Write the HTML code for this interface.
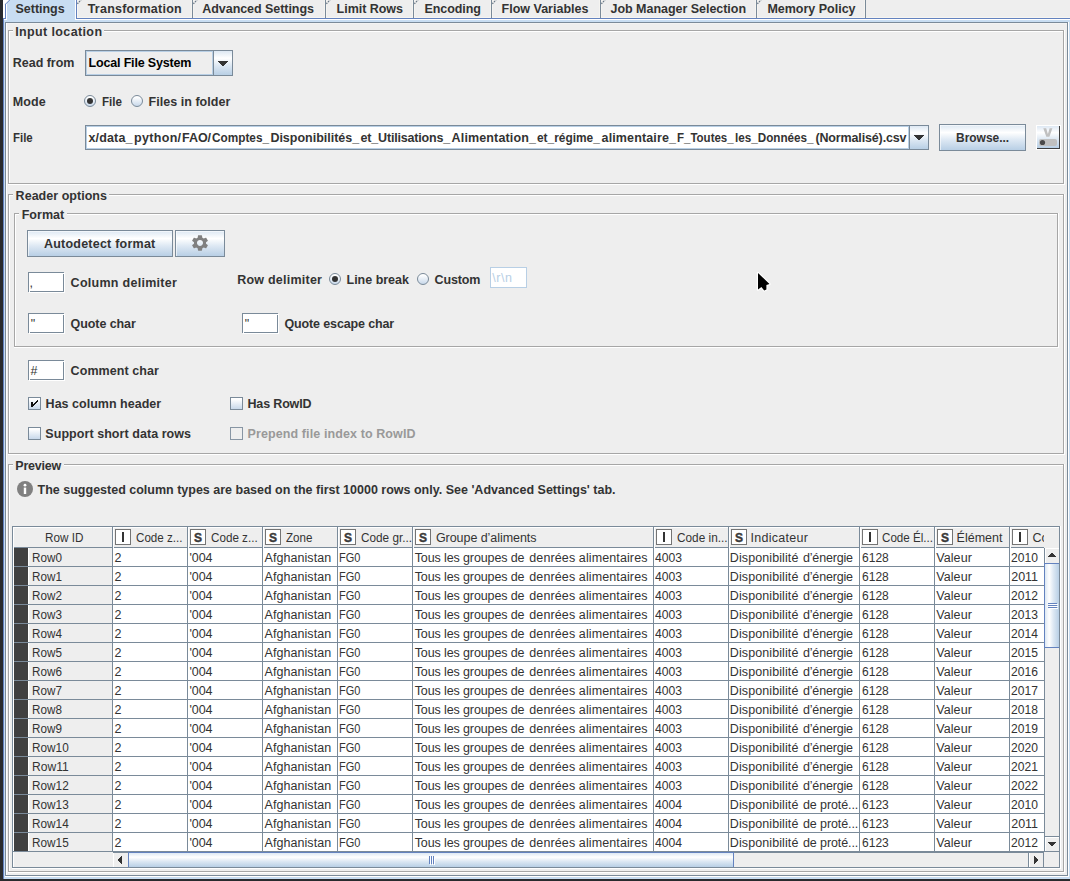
<!DOCTYPE html>
<html><head><meta charset="utf-8">
<style>
*{box-sizing:border-box;margin:0;padding:0}
html,body{width:1070px;height:881px;overflow:hidden;background:#eeeeee;font-family:"Liberation Sans",sans-serif;font-size:12.5px;color:#333333}
.t{position:absolute;white-space:pre;line-height:16px;height:16px}
</style></head><body>
<div style="position:absolute;left:3px;top:0px;width:1067px;height:18px;background:#eeeeee;"></div>
<div style="position:absolute;left:3px;top:0px;width:2px;height:18px;background:#ffffff;"></div>
<div style="position:absolute;left:4px;top:19px;width:1066px;height:3px;background:#c8ddf2;"></div>
<div style="position:absolute;left:4px;top:19px;width:1px;height:860px;background:#c8ddf2;"></div>
<div style="position:absolute;left:1069px;top:20px;width:1px;height:859px;background:#c8ddf2;"></div>
<div style="position:absolute;left:4px;top:877px;width:1066px;height:2px;background:#c8ddf2;"></div>
<div style="position:absolute;left:3px;top:18px;width:1px;height:861px;background:#6382bf;"></div>
<div style="position:absolute;left:3px;top:18px;width:1067px;height:1px;background:#6382bf;"></div>
<div style="position:absolute;left:4px;top:19px;width:1066px;height:1px;background:#ffffff;"></div>
<div style="position:absolute;left:6px;top:0px;width:70px;height:22px;background:#c8ddf2;"></div>
<div style="position:absolute;left:5px;top:0px;width:1px;height:19px;background:#6382bf;"></div>
<div style="position:absolute;left:6px;top:0px;width:1px;height:20px;background:#ffffff;"></div>
<div style="position:absolute;left:75px;top:0px;width:1px;height:20px;background:#ffffff;"></div>
<div style="position:absolute;left:77px;top:17px;width:993px;height:1px;background:#f6f5f2;"></div>
<div style="position:absolute;left:76px;top:0px;width:1px;height:19px;background:#6382bf;"></div>
<div style="position:absolute;left:77px;top:0px;width:1px;height:18px;background:#f8f7f5;"></div>
<div style="position:absolute;left:191px;top:0px;width:1px;height:18px;background:#f5f4f1;"></div>
<div style="position:absolute;left:193px;top:0px;width:1px;height:18px;background:#f5f4f1;"></div>
<div style="position:absolute;left:192px;top:0px;width:1px;height:18px;background:#7a8a99;"></div>
<div style="position:absolute;left:324px;top:0px;width:1px;height:18px;background:#f5f4f1;"></div>
<div style="position:absolute;left:326px;top:0px;width:1px;height:18px;background:#f5f4f1;"></div>
<div style="position:absolute;left:325px;top:0px;width:1px;height:18px;background:#7a8a99;"></div>
<div style="position:absolute;left:412px;top:0px;width:1px;height:18px;background:#f5f4f1;"></div>
<div style="position:absolute;left:414px;top:0px;width:1px;height:18px;background:#f5f4f1;"></div>
<div style="position:absolute;left:413px;top:0px;width:1px;height:18px;background:#7a8a99;"></div>
<div style="position:absolute;left:490px;top:0px;width:1px;height:18px;background:#f5f4f1;"></div>
<div style="position:absolute;left:492px;top:0px;width:1px;height:18px;background:#f5f4f1;"></div>
<div style="position:absolute;left:491px;top:0px;width:1px;height:18px;background:#7a8a99;"></div>
<div style="position:absolute;left:599px;top:0px;width:1px;height:18px;background:#f5f4f1;"></div>
<div style="position:absolute;left:601px;top:0px;width:1px;height:18px;background:#f5f4f1;"></div>
<div style="position:absolute;left:600px;top:0px;width:1px;height:18px;background:#7a8a99;"></div>
<div style="position:absolute;left:755px;top:0px;width:1px;height:18px;background:#f5f4f1;"></div>
<div style="position:absolute;left:757px;top:0px;width:1px;height:18px;background:#f5f4f1;"></div>
<div style="position:absolute;left:756px;top:0px;width:1px;height:18px;background:#7a8a99;"></div>
<div style="position:absolute;left:864px;top:0px;width:1px;height:18px;background:#f5f4f1;"></div>
<div style="position:absolute;left:865px;top:0px;width:1px;height:18px;background:#7a8a99;"></div>
<svg style="position:absolute;left:3px;top:0" width="8" height="5"><path d="M0 0 H6.5 L2.5 4 H0Z" fill="#fff"/><path d="M2.5 4.2 L6.7 0" stroke="#6382bf" stroke-width="1" fill="none"/></svg>
<svg style="position:absolute;left:77px;top:0" width="6" height="5"><path d="M0 0 H4 L0 4Z" fill="#f4f3f1"/><path d="M0.3 3.8 L4 0" stroke="#6c7a88" stroke-width="1.3" stroke-dasharray="1.5 0.9" fill="none"/></svg>
<svg style="position:absolute;left:193px;top:0" width="6" height="5"><path d="M0 0 H4 L0 4Z" fill="#f4f3f1"/><path d="M0.3 3.8 L4 0" stroke="#6c7a88" stroke-width="1.3" stroke-dasharray="1.5 0.9" fill="none"/></svg>
<svg style="position:absolute;left:326px;top:0" width="6" height="5"><path d="M0 0 H4 L0 4Z" fill="#f4f3f1"/><path d="M0.3 3.8 L4 0" stroke="#6c7a88" stroke-width="1.3" stroke-dasharray="1.5 0.9" fill="none"/></svg>
<svg style="position:absolute;left:414px;top:0" width="6" height="5"><path d="M0 0 H4 L0 4Z" fill="#f4f3f1"/><path d="M0.3 3.8 L4 0" stroke="#6c7a88" stroke-width="1.3" stroke-dasharray="1.5 0.9" fill="none"/></svg>
<svg style="position:absolute;left:492px;top:0" width="6" height="5"><path d="M0 0 H4 L0 4Z" fill="#f4f3f1"/><path d="M0.3 3.8 L4 0" stroke="#6c7a88" stroke-width="1.3" stroke-dasharray="1.5 0.9" fill="none"/></svg>
<svg style="position:absolute;left:601px;top:0" width="6" height="5"><path d="M0 0 H4 L0 4Z" fill="#f4f3f1"/><path d="M0.3 3.8 L4 0" stroke="#6c7a88" stroke-width="1.3" stroke-dasharray="1.5 0.9" fill="none"/></svg>
<svg style="position:absolute;left:757px;top:0" width="6" height="5"><path d="M0 0 H4 L0 4Z" fill="#f4f3f1"/><path d="M0.3 3.8 L4 0" stroke="#6c7a88" stroke-width="1.3" stroke-dasharray="1.5 0.9" fill="none"/></svg>
<div style="position:absolute;left:5px;top:22px;width:1063px;height:854px;background:#eeeeee;"></div>
<div style="position:absolute;left:5px;top:22px;width:1063px;height:1px;background:#7a8a99;"></div>
<div style="position:absolute;left:6px;top:23px;width:1061px;height:1px;background:#ffffff;"></div>
<div style="position:absolute;left:5px;top:22px;width:1px;height:854px;background:#7a8a99;"></div>
<div style="position:absolute;left:6px;top:23px;width:1px;height:852px;background:#ffffff;"></div>
<div style="position:absolute;left:5px;top:875px;width:1063px;height:1px;background:#7a8a99;"></div>
<div style="position:absolute;left:5px;top:876px;width:1064px;height:1px;background:#ffffff;"></div>
<div style="position:absolute;left:1067px;top:22px;width:1px;height:854px;background:#7a8a99;"></div>
<div style="position:absolute;left:1068px;top:22px;width:1px;height:855px;background:#ffffff;"></div>
<div style="position:absolute;left:7px;top:23px;width:1060px;height:1px;background:#f3f3f3;"></div>
<div style="position:absolute;left:0px;top:0px;width:3px;height:881px;background:#292b2e;"></div>
<div style="position:absolute;left:0px;top:879px;width:1070px;height:2px;background:#292b2e;"></div>
<div style="position:absolute;left:8px;top:30px;width:5px;height:1px;background:#a6a6a6;"></div>
<div style="position:absolute;left:104px;top:30px;width:960px;height:1px;background:#a6a6a6;"></div>
<div style="position:absolute;left:9px;top:31px;width:4px;height:1px;background:#ffffff;"></div>
<div style="position:absolute;left:104px;top:31px;width:959px;height:1px;background:#ffffff;"></div>
<div style="position:absolute;left:8px;top:30px;width:1px;height:154px;background:#a6a6a6;"></div>
<div style="position:absolute;left:9px;top:31px;width:1px;height:152px;background:#ffffff;"></div>
<div style="position:absolute;left:8px;top:183px;width:1056px;height:1px;background:#a6a6a6;"></div>
<div style="position:absolute;left:8px;top:184px;width:1057px;height:1px;background:#ffffff;"></div>
<div style="position:absolute;left:1063px;top:30px;width:1px;height:154px;background:#a6a6a6;"></div>
<div style="position:absolute;left:1064px;top:30px;width:1px;height:155px;background:#ffffff;"></div>
<div style="position:absolute;left:85px;top:50px;width:148px;height:26px;border:1px solid #7a8a99;background:#eeeeee"></div>
<div style="position:absolute;left:86px;top:51px;width:127px;height:24px;border:1px solid #b8cfe5"></div>
<div style="position:absolute;left:213px;top:50px;width:20px;height:26px;border:1px solid #7a8a99;background:linear-gradient(#dde8f3 0%,#ffffff 30%,#dde8f3 60%,#b8cfe5 100%)"></div>
<svg style="position:absolute;left:218px;top:61px" width="12" height="8" shape-rendering="crispEdges" fill="#333"><rect x="0" y="0" width="10" height="1"/><rect x="1" y="1" width="8" height="1"/><rect x="2" y="2" width="6" height="1"/><rect x="3" y="3" width="4" height="1"/><rect x="4" y="4" width="2" height="1"/></svg>
<div style="position:absolute;left:84px;top:95px;width:12px;height:12px;border-radius:50%;border:1px solid #7a8a99;background:linear-gradient(#ffffff 10%,#c8d8ea 100%)"></div>
<div style="position:absolute;left:87px;top:98px;width:6px;height:6px;border-radius:50%;background:#333"></div>
<div style="position:absolute;left:131px;top:95px;width:12px;height:12px;border-radius:50%;border:1px solid #7a8a99;background:linear-gradient(#ffffff 10%,#c8d8ea 100%)"></div>
<div style="position:absolute;left:85px;top:125px;width:844px;height:25px;border:1px solid #7a8a99;background:#ffffff"></div>
<div style="position:absolute;left:86px;top:126px;width:823px;height:23px;border:1px solid #b8cfe5"></div>
<div style="position:absolute;left:909px;top:125px;width:20px;height:25px;border:1px solid #7a8a99;background:linear-gradient(#dde8f3 0%,#ffffff 30%,#dde8f3 60%,#b8cfe5 100%)"></div>
<svg style="position:absolute;left:914px;top:135px" width="12" height="8" shape-rendering="crispEdges" fill="#333"><rect x="0" y="0" width="10" height="1"/><rect x="1" y="1" width="8" height="1"/><rect x="2" y="2" width="6" height="1"/><rect x="3" y="3" width="4" height="1"/><rect x="4" y="4" width="2" height="1"/></svg>
<div style="position:absolute;left:939px;top:124px;width:87px;height:27px;border:1px solid #7a8a99;background:linear-gradient(#dde8f3 0%,#ffffff 30%,#dde8f3 60%,#b8cfe5 100%)"></div>
<div style="position:absolute;left:940px;top:125px;width:85px;height:1px;background:rgba(255,255,255,.6);"></div>
<div style="position:absolute;left:940px;top:125px;width:1px;height:25px;background:rgba(255,255,255,.6);"></div>
<div style="position:absolute;left:1036px;top:125px;width:25px;height:25px;background:#ffffff;"></div>
<div style="position:absolute;left:1037px;top:126px;width:23px;height:23px;background:#404040;"></div>
<div style="position:absolute;left:1037px;top:126px;width:22px;height:22px;background:;background:linear-gradient(#dde8f3 0%,#ffffff 30%,#dde8f3 60%,#b8cfe5 100%)"></div>
<svg style="position:absolute;left:1037px;top:126px" width="22" height="22"><path d="M6.3 2.2 H9.2 L10.9 8 L12.6 2.2 H15.4 L12.4 10.8 H9.3 Z" fill="#c0c0c0"/><rect x="2" y="13" width="18" height="7" rx="2" fill="#c0c0c0"/><circle cx="5.5" cy="16.5" r="2.6" fill="#4a4a4a"/></svg>
<div style="position:absolute;left:8px;top:194px;width:5px;height:1px;background:#a6a6a6;"></div>
<div style="position:absolute;left:109px;top:194px;width:955px;height:1px;background:#a6a6a6;"></div>
<div style="position:absolute;left:9px;top:195px;width:4px;height:1px;background:#ffffff;"></div>
<div style="position:absolute;left:109px;top:195px;width:954px;height:1px;background:#ffffff;"></div>
<div style="position:absolute;left:8px;top:194px;width:1px;height:260px;background:#a6a6a6;"></div>
<div style="position:absolute;left:9px;top:195px;width:1px;height:258px;background:#ffffff;"></div>
<div style="position:absolute;left:8px;top:453px;width:1056px;height:1px;background:#a6a6a6;"></div>
<div style="position:absolute;left:8px;top:454px;width:1057px;height:1px;background:#ffffff;"></div>
<div style="position:absolute;left:1063px;top:194px;width:1px;height:260px;background:#a6a6a6;"></div>
<div style="position:absolute;left:1064px;top:194px;width:1px;height:261px;background:#ffffff;"></div>
<div style="position:absolute;left:14px;top:213px;width:5px;height:1px;background:#a6a6a6;"></div>
<div style="position:absolute;left:67px;top:213px;width:991px;height:1px;background:#a6a6a6;"></div>
<div style="position:absolute;left:15px;top:214px;width:4px;height:1px;background:#ffffff;"></div>
<div style="position:absolute;left:67px;top:214px;width:990px;height:1px;background:#ffffff;"></div>
<div style="position:absolute;left:14px;top:213px;width:1px;height:134px;background:#a6a6a6;"></div>
<div style="position:absolute;left:15px;top:214px;width:1px;height:132px;background:#ffffff;"></div>
<div style="position:absolute;left:14px;top:346px;width:1044px;height:1px;background:#a6a6a6;"></div>
<div style="position:absolute;left:14px;top:347px;width:1045px;height:1px;background:#ffffff;"></div>
<div style="position:absolute;left:1057px;top:213px;width:1px;height:134px;background:#a6a6a6;"></div>
<div style="position:absolute;left:1058px;top:213px;width:1px;height:135px;background:#ffffff;"></div>
<div style="position:absolute;left:27px;top:230px;width:146px;height:27px;border:1px solid #7a8a99;background:linear-gradient(#dde8f3 0%,#ffffff 30%,#dde8f3 60%,#b8cfe5 100%)"></div>
<div style="position:absolute;left:28px;top:231px;width:144px;height:1px;background:rgba(255,255,255,.6);"></div>
<div style="position:absolute;left:28px;top:231px;width:1px;height:25px;background:rgba(255,255,255,.6);"></div>
<div style="position:absolute;left:175px;top:230px;width:50px;height:27px;border:1px solid #7a8a99;background:linear-gradient(#dde8f3 0%,#ffffff 30%,#dde8f3 60%,#b8cfe5 100%)"></div>
<div style="position:absolute;left:176px;top:231px;width:48px;height:1px;background:rgba(255,255,255,.6);"></div>
<div style="position:absolute;left:176px;top:231px;width:1px;height:25px;background:rgba(255,255,255,.6);"></div>
<svg style="position:absolute;left:192px;top:235px" width="16" height="16" viewBox="2.5 2 19 20" preserveAspectRatio="none"><path fill="#808080" d="M19.14 12.94c.04-.3.06-.61.06-.94 0-.32-.02-.64-.07-.94l2.03-1.58a.49.49 0 0 0 .12-.61l-1.92-3.32a.488.488 0 0 0-.59-.22l-2.39.96c-.5-.38-1.03-.7-1.62-.94l-.36-2.54a.484.484 0 0 0-.48-.41h-3.84c-.24 0-.43.17-.47.41l-.36 2.54c-.59.24-1.13.57-1.62.94l-2.39-.96c-.22-.08-.47 0-.59.22L2.74 8.87c-.12.21-.08.47.12.61l2.03 1.58c-.05.3-.09.63-.09.94s.02.64.07.94l-2.03 1.58a.49.49 0 0 0-.12.61l1.92 3.32c.12.22.37.29.59.22l2.39-.96c.5.38 1.03.7 1.62.94l.36 2.54c.05.24.24.41.48.41h3.84c.24 0 .44-.17.47-.41l.36-2.54c.59-.24 1.13-.56 1.62-.94l2.39.96c.22.08.47 0 .59-.22l1.92-3.32c.12-.22.07-.47-.12-.61l-2.01-1.58zM12 15.6c-1.98 0-3.600-1.620-3.600-3.600s1.620-3.600 3.600-3.600 3.600 1.620 3.600 3.600-1.620 3.600-3.600 3.600z"/></svg>
<div style="position:absolute;left:29px;top:273px;width:36px;height:20px;border:1px solid #ffffff"></div>
<div style="position:absolute;left:28px;top:272px;width:36px;height:20px;border:1px solid #7a8a99;background:#ffffff"></div>
<div style="position:absolute;left:63px;top:273px;width:1px;height:1px;background:#ffffff;"></div>
<div style="position:absolute;left:29px;top:291px;width:1px;height:1px;background:#ffffff;"></div>
<div style="position:absolute;left:329px;top:273px;width:12px;height:12px;border-radius:50%;border:1px solid #7a8a99;background:linear-gradient(#ffffff 10%,#c8d8ea 100%)"></div>
<div style="position:absolute;left:332px;top:276px;width:6px;height:6px;border-radius:50%;background:#333"></div>
<div style="position:absolute;left:417px;top:273px;width:12px;height:12px;border-radius:50%;border:1px solid #7a8a99;background:linear-gradient(#ffffff 10%,#c8d8ea 100%)"></div>
<div style="position:absolute;left:490px;top:267px;width:37px;height:21px;border:1px solid #b8cfe5;background:#ffffff"></div>
<div style="position:absolute;left:29px;top:314px;width:36px;height:20px;border:1px solid #ffffff"></div>
<div style="position:absolute;left:28px;top:313px;width:36px;height:20px;border:1px solid #7a8a99;background:#ffffff"></div>
<div style="position:absolute;left:63px;top:314px;width:1px;height:1px;background:#ffffff;"></div>
<div style="position:absolute;left:29px;top:332px;width:1px;height:1px;background:#ffffff;"></div>
<div style="position:absolute;left:243px;top:314px;width:36px;height:20px;border:1px solid #ffffff"></div>
<div style="position:absolute;left:242px;top:313px;width:36px;height:20px;border:1px solid #7a8a99;background:#ffffff"></div>
<div style="position:absolute;left:277px;top:314px;width:1px;height:1px;background:#ffffff;"></div>
<div style="position:absolute;left:243px;top:332px;width:1px;height:1px;background:#ffffff;"></div>
<div style="position:absolute;left:29px;top:361px;width:36px;height:20px;border:1px solid #ffffff"></div>
<div style="position:absolute;left:28px;top:360px;width:36px;height:20px;border:1px solid #7a8a99;background:#ffffff"></div>
<div style="position:absolute;left:63px;top:361px;width:1px;height:1px;background:#ffffff;"></div>
<div style="position:absolute;left:29px;top:379px;width:1px;height:1px;background:#ffffff;"></div>
<div style="position:absolute;left:28px;top:397px;width:13px;height:13px;border:1px solid #7a8a99;background:linear-gradient(#ffffff 10%,#c8d8ea 100%)"></div>
<svg style="position:absolute;left:28px;top:397px" width="13" height="13" shape-rendering="crispEdges" fill="#111"><rect x="3" y="5" width="2" height="5"/><rect x="9" y="3" width="1" height="1"/><rect x="8" y="4" width="1" height="1"/><rect x="7" y="5" width="1" height="1"/><rect x="6" y="6" width="1" height="1"/><rect x="5" y="7" width="1" height="1"/><rect x="9" y="4" width="1" height="1"/><rect x="8" y="5" width="1" height="1"/><rect x="7" y="6" width="1" height="1"/><rect x="6" y="7" width="1" height="1"/><rect x="5" y="8" width="1" height="1"/></svg>
<div style="position:absolute;left:230px;top:397px;width:13px;height:13px;border:1px solid #7a8a99;background:linear-gradient(#ffffff 10%,#c8d8ea 100%)"></div>
<div style="position:absolute;left:28px;top:427px;width:13px;height:13px;border:1px solid #7a8a99;background:linear-gradient(#ffffff 10%,#c8d8ea 100%)"></div>
<div style="position:absolute;left:230px;top:427px;width:13px;height:13px;border:1px solid #8795a3;background:#eeeeee"></div>
<div style="position:absolute;left:8px;top:464px;width:5px;height:1px;background:#a6a6a6;"></div>
<div style="position:absolute;left:64px;top:464px;width:1000px;height:1px;background:#a6a6a6;"></div>
<div style="position:absolute;left:9px;top:465px;width:4px;height:1px;background:#ffffff;"></div>
<div style="position:absolute;left:64px;top:465px;width:999px;height:1px;background:#ffffff;"></div>
<div style="position:absolute;left:8px;top:464px;width:1px;height:408px;background:#a6a6a6;"></div>
<div style="position:absolute;left:9px;top:465px;width:1px;height:406px;background:#ffffff;"></div>
<div style="position:absolute;left:8px;top:871px;width:1056px;height:1px;background:#a6a6a6;"></div>
<div style="position:absolute;left:8px;top:872px;width:1057px;height:1px;background:#ffffff;"></div>
<div style="position:absolute;left:1063px;top:464px;width:1px;height:408px;background:#a6a6a6;"></div>
<div style="position:absolute;left:1064px;top:464px;width:1px;height:409px;background:#ffffff;"></div>
<svg style="position:absolute;left:17px;top:481px" width="16" height="16"><circle cx="8" cy="8" r="8" fill="#808080"/><rect x="6.8" y="6.6" width="2.4" height="6.4" fill="#fff"/><circle cx="8" cy="4.2" r="1.4" fill="#fff"/></svg>
<div style="position:absolute;left:12px;top:526px;width:1048px;height:342px;background:#eeeeee;"></div>
<div style="position:absolute;left:12px;top:526px;width:1048px;height:1px;background:#7a8a99;"></div>
<div style="position:absolute;left:13px;top:527px;width:1046px;height:1px;background:#ffffff;"></div>
<div style="position:absolute;left:12px;top:526px;width:1px;height:342px;background:#7a8a99;"></div>
<div style="position:absolute;left:13px;top:527px;width:1px;height:340px;background:#ffffff;"></div>
<div style="position:absolute;left:12px;top:867px;width:1048px;height:1px;background:#7a8a99;"></div>
<div style="position:absolute;left:12px;top:868px;width:1049px;height:1px;background:#ffffff;"></div>
<div style="position:absolute;left:1059px;top:526px;width:1px;height:342px;background:#7a8a99;"></div>
<div style="position:absolute;left:1060px;top:526px;width:1px;height:343px;background:#ffffff;"></div>
<div style="position:absolute;left:113px;top:548px;width:931px;height:303px;background:#ffffff;"></div>
<div style="position:absolute;left:13px;top:527px;width:1031px;height:1px;background:#ffffff;"></div>
<div style="position:absolute;left:112px;top:527px;width:1px;height:325px;background:#7a8a99;"></div>
<div style="position:absolute;left:187px;top:527px;width:1px;height:325px;background:#7a8a99;"></div>
<div style="position:absolute;left:262px;top:527px;width:1px;height:325px;background:#7a8a99;"></div>
<div style="position:absolute;left:337px;top:527px;width:1px;height:325px;background:#7a8a99;"></div>
<div style="position:absolute;left:412px;top:527px;width:1px;height:325px;background:#7a8a99;"></div>
<div style="position:absolute;left:653px;top:527px;width:1px;height:325px;background:#7a8a99;"></div>
<div style="position:absolute;left:728px;top:527px;width:1px;height:325px;background:#7a8a99;"></div>
<div style="position:absolute;left:859px;top:527px;width:1px;height:325px;background:#7a8a99;"></div>
<div style="position:absolute;left:934px;top:527px;width:1px;height:325px;background:#7a8a99;"></div>
<div style="position:absolute;left:1009px;top:527px;width:1px;height:325px;background:#7a8a99;"></div>
<div style="position:absolute;left:14px;top:547px;width:1030px;height:1px;background:#7a8a99;"></div>
<div style="position:absolute;left:113px;top:527px;width:1px;height:21px;background:#ffffff;"></div>
<div style="position:absolute;left:188px;top:527px;width:1px;height:21px;background:#ffffff;"></div>
<div style="position:absolute;left:263px;top:527px;width:1px;height:21px;background:#ffffff;"></div>
<div style="position:absolute;left:338px;top:527px;width:1px;height:21px;background:#ffffff;"></div>
<div style="position:absolute;left:413px;top:527px;width:1px;height:21px;background:#ffffff;"></div>
<div style="position:absolute;left:654px;top:527px;width:1px;height:21px;background:#ffffff;"></div>
<div style="position:absolute;left:729px;top:527px;width:1px;height:21px;background:#ffffff;"></div>
<div style="position:absolute;left:860px;top:527px;width:1px;height:21px;background:#ffffff;"></div>
<div style="position:absolute;left:935px;top:527px;width:1px;height:21px;background:#ffffff;"></div>
<div style="position:absolute;left:1010px;top:527px;width:1px;height:21px;background:#ffffff;"></div>
<div style="position:absolute;left:14px;top:566px;width:1030px;height:1px;background:#7a8a99;"></div>
<div style="position:absolute;left:14px;top:585px;width:1030px;height:1px;background:#7a8a99;"></div>
<div style="position:absolute;left:14px;top:604px;width:1030px;height:1px;background:#7a8a99;"></div>
<div style="position:absolute;left:14px;top:623px;width:1030px;height:1px;background:#7a8a99;"></div>
<div style="position:absolute;left:14px;top:642px;width:1030px;height:1px;background:#7a8a99;"></div>
<div style="position:absolute;left:14px;top:661px;width:1030px;height:1px;background:#7a8a99;"></div>
<div style="position:absolute;left:14px;top:680px;width:1030px;height:1px;background:#7a8a99;"></div>
<div style="position:absolute;left:14px;top:699px;width:1030px;height:1px;background:#7a8a99;"></div>
<div style="position:absolute;left:14px;top:718px;width:1030px;height:1px;background:#7a8a99;"></div>
<div style="position:absolute;left:14px;top:737px;width:1030px;height:1px;background:#7a8a99;"></div>
<div style="position:absolute;left:14px;top:756px;width:1030px;height:1px;background:#7a8a99;"></div>
<div style="position:absolute;left:14px;top:775px;width:1030px;height:1px;background:#7a8a99;"></div>
<div style="position:absolute;left:14px;top:794px;width:1030px;height:1px;background:#7a8a99;"></div>
<div style="position:absolute;left:14px;top:813px;width:1030px;height:1px;background:#7a8a99;"></div>
<div style="position:absolute;left:14px;top:832px;width:1030px;height:1px;background:#7a8a99;"></div>
<div style="position:absolute;left:14px;top:851px;width:1030px;height:1px;background:#7a8a99;"></div>
<div style="position:absolute;left:13px;top:851px;width:1031px;height:1px;background:#7a8a99;"></div>
<div style="position:absolute;left:14px;top:548px;width:14px;height:18px;background:#404040;"></div>
<div style="position:absolute;left:28px;top:548px;width:1px;height:18px;background:#ffffff;"></div>
<div style="position:absolute;left:14px;top:567px;width:14px;height:18px;background:#404040;"></div>
<div style="position:absolute;left:28px;top:567px;width:1px;height:18px;background:#ffffff;"></div>
<div style="position:absolute;left:14px;top:586px;width:14px;height:18px;background:#404040;"></div>
<div style="position:absolute;left:28px;top:586px;width:1px;height:18px;background:#ffffff;"></div>
<div style="position:absolute;left:14px;top:605px;width:14px;height:18px;background:#404040;"></div>
<div style="position:absolute;left:28px;top:605px;width:1px;height:18px;background:#ffffff;"></div>
<div style="position:absolute;left:14px;top:624px;width:14px;height:18px;background:#404040;"></div>
<div style="position:absolute;left:28px;top:624px;width:1px;height:18px;background:#ffffff;"></div>
<div style="position:absolute;left:14px;top:643px;width:14px;height:18px;background:#404040;"></div>
<div style="position:absolute;left:28px;top:643px;width:1px;height:18px;background:#ffffff;"></div>
<div style="position:absolute;left:14px;top:662px;width:14px;height:18px;background:#404040;"></div>
<div style="position:absolute;left:28px;top:662px;width:1px;height:18px;background:#ffffff;"></div>
<div style="position:absolute;left:14px;top:681px;width:14px;height:18px;background:#404040;"></div>
<div style="position:absolute;left:28px;top:681px;width:1px;height:18px;background:#ffffff;"></div>
<div style="position:absolute;left:14px;top:700px;width:14px;height:18px;background:#404040;"></div>
<div style="position:absolute;left:28px;top:700px;width:1px;height:18px;background:#ffffff;"></div>
<div style="position:absolute;left:14px;top:719px;width:14px;height:18px;background:#404040;"></div>
<div style="position:absolute;left:28px;top:719px;width:1px;height:18px;background:#ffffff;"></div>
<div style="position:absolute;left:14px;top:738px;width:14px;height:18px;background:#404040;"></div>
<div style="position:absolute;left:28px;top:738px;width:1px;height:18px;background:#ffffff;"></div>
<div style="position:absolute;left:14px;top:757px;width:14px;height:18px;background:#404040;"></div>
<div style="position:absolute;left:28px;top:757px;width:1px;height:18px;background:#ffffff;"></div>
<div style="position:absolute;left:14px;top:776px;width:14px;height:18px;background:#404040;"></div>
<div style="position:absolute;left:28px;top:776px;width:1px;height:18px;background:#ffffff;"></div>
<div style="position:absolute;left:14px;top:795px;width:14px;height:18px;background:#404040;"></div>
<div style="position:absolute;left:28px;top:795px;width:1px;height:18px;background:#ffffff;"></div>
<div style="position:absolute;left:14px;top:814px;width:14px;height:18px;background:#404040;"></div>
<div style="position:absolute;left:28px;top:814px;width:1px;height:18px;background:#ffffff;"></div>
<div style="position:absolute;left:14px;top:833px;width:14px;height:18px;background:#404040;"></div>
<div style="position:absolute;left:28px;top:833px;width:1px;height:18px;background:#ffffff;"></div>
<div style="position:absolute;left:115px;top:529px;width:16px;height:16px;border:1px solid #747474;background:#fff"></div>
<div style="position:absolute;left:122px;top:532px;width:2px;height:10px;background:#333;"></div>
<div style="position:absolute;left:190px;top:529px;width:16px;height:16px;border:1px solid #747474;background:#fff"></div>
<svg style="position:absolute;left:190px;top:529px" width="16" height="16"><text x="8.1" y="12.75" text-anchor="middle" font-family="Liberation Sans" font-weight="bold" font-size="13.4" fill="#3a3a3a" stroke="#3a3a3a" stroke-width="0.45" textLength="8" lengthAdjust="spacingAndGlyphs">S</text></svg>
<div style="position:absolute;left:265px;top:529px;width:16px;height:16px;border:1px solid #747474;background:#fff"></div>
<svg style="position:absolute;left:265px;top:529px" width="16" height="16"><text x="8.1" y="12.75" text-anchor="middle" font-family="Liberation Sans" font-weight="bold" font-size="13.4" fill="#3a3a3a" stroke="#3a3a3a" stroke-width="0.45" textLength="8" lengthAdjust="spacingAndGlyphs">S</text></svg>
<div style="position:absolute;left:340px;top:529px;width:16px;height:16px;border:1px solid #747474;background:#fff"></div>
<svg style="position:absolute;left:340px;top:529px" width="16" height="16"><text x="8.1" y="12.75" text-anchor="middle" font-family="Liberation Sans" font-weight="bold" font-size="13.4" fill="#3a3a3a" stroke="#3a3a3a" stroke-width="0.45" textLength="8" lengthAdjust="spacingAndGlyphs">S</text></svg>
<div style="position:absolute;left:415px;top:529px;width:16px;height:16px;border:1px solid #747474;background:#fff"></div>
<svg style="position:absolute;left:415px;top:529px" width="16" height="16"><text x="8.1" y="12.75" text-anchor="middle" font-family="Liberation Sans" font-weight="bold" font-size="13.4" fill="#3a3a3a" stroke="#3a3a3a" stroke-width="0.45" textLength="8" lengthAdjust="spacingAndGlyphs">S</text></svg>
<div style="position:absolute;left:656px;top:529px;width:16px;height:16px;border:1px solid #747474;background:#fff"></div>
<div style="position:absolute;left:663px;top:532px;width:2px;height:10px;background:#333;"></div>
<div style="position:absolute;left:731px;top:529px;width:16px;height:16px;border:1px solid #747474;background:#fff"></div>
<svg style="position:absolute;left:731px;top:529px" width="16" height="16"><text x="8.1" y="12.75" text-anchor="middle" font-family="Liberation Sans" font-weight="bold" font-size="13.4" fill="#3a3a3a" stroke="#3a3a3a" stroke-width="0.45" textLength="8" lengthAdjust="spacingAndGlyphs">S</text></svg>
<div style="position:absolute;left:862px;top:529px;width:16px;height:16px;border:1px solid #747474;background:#fff"></div>
<div style="position:absolute;left:869px;top:532px;width:2px;height:10px;background:#333;"></div>
<div style="position:absolute;left:937px;top:529px;width:16px;height:16px;border:1px solid #747474;background:#fff"></div>
<svg style="position:absolute;left:937px;top:529px" width="16" height="16"><text x="8.1" y="12.75" text-anchor="middle" font-family="Liberation Sans" font-weight="bold" font-size="13.4" fill="#3a3a3a" stroke="#3a3a3a" stroke-width="0.45" textLength="8" lengthAdjust="spacingAndGlyphs">S</text></svg>
<div style="position:absolute;left:1012px;top:529px;width:16px;height:16px;border:1px solid #747474;background:#fff"></div>
<div style="position:absolute;left:1019px;top:532px;width:2px;height:10px;background:#333;"></div>
<div style="position:absolute;left:1044px;top:548px;width:15px;height:304px;background:#eeeeee;"></div>
<div style="position:absolute;left:1044px;top:548px;width:1px;height:304px;background:#7a8a99;"></div>
<div style="position:absolute;left:1045px;top:548px;width:14px;height:1px;background:#ffffff;"></div>
<svg style="position:absolute;left:1048px;top:553px" width="8" height="4" shape-rendering="crispEdges" fill="#333"><rect x="3" y="0" width="2" height="1"/><rect x="2" y="1" width="4" height="1"/><rect x="1" y="2" width="6" height="1"/><rect x="0" y="3" width="8" height="1"/></svg>
<div style="position:absolute;left:1044px;top:563px;width:15px;height:85px;border:1px solid #6382bf;border-right:none;background:linear-gradient(90deg,#dde8f3 0%,#ffffff 30%,#dde8f3 60%,#b8cfe5 100%)"></div>
<div style="position:absolute;left:1048px;top:603px;width:9px;height:1px;background:#6382bf;"></div>
<div style="position:absolute;left:1049px;top:604px;width:9px;height:1px;background:#ffffff;"></div>
<div style="position:absolute;left:1048px;top:605px;width:9px;height:1px;background:#6382bf;"></div>
<div style="position:absolute;left:1049px;top:606px;width:9px;height:1px;background:#ffffff;"></div>
<div style="position:absolute;left:1048px;top:607px;width:9px;height:1px;background:#6382bf;"></div>
<div style="position:absolute;left:1049px;top:608px;width:9px;height:1px;background:#ffffff;"></div>
<div style="position:absolute;left:1045px;top:836px;width:14px;height:1px;background:#7a8a99;"></div>
<div style="position:absolute;left:1045px;top:837px;width:14px;height:1px;background:#ffffff;"></div>
<div style="position:absolute;left:1045px;top:837px;width:1px;height:14px;background:#ffffff;"></div>
<div style="position:absolute;left:1045px;top:549px;width:1px;height:14px;background:#ffffff;"></div>
<svg style="position:absolute;left:1048px;top:842px" width="8" height="4" shape-rendering="crispEdges" fill="#333"><rect x="0" y="0" width="8" height="1"/><rect x="1" y="1" width="6" height="1"/><rect x="2" y="2" width="4" height="1"/><rect x="3" y="3" width="2" height="1"/></svg>
<div style="position:absolute;left:1044px;top:851px;width:15px;height:1px;background:#7a8a99;"></div>
<div style="position:absolute;left:113px;top:852px;width:931px;height:1px;background:#7a8a99;"></div>
<div style="position:absolute;left:113px;top:853px;width:1px;height:14px;background:#ffffff;"></div>
<svg style="position:absolute;left:118px;top:856px" width="4" height="8" shape-rendering="crispEdges" fill="#333"><rect x="3" y="0" width="1" height="8"/><rect x="2" y="1" width="1" height="6"/><rect x="1" y="2" width="1" height="4"/><rect x="0" y="3" width="1" height="2"/></svg>
<div style="position:absolute;left:128px;top:852px;width:606px;height:15px;border:1px solid #6382bf;border-bottom:none;background:linear-gradient(#dde8f3 0%,#ffffff 30%,#dde8f3 60%,#b8cfe5 100%)"></div>
<div style="position:absolute;left:429px;top:856px;width:1px;height:8px;background:#6382bf;"></div>
<div style="position:absolute;left:430px;top:857px;width:1px;height:8px;background:#ffffff;"></div>
<div style="position:absolute;left:431px;top:856px;width:1px;height:8px;background:#6382bf;"></div>
<div style="position:absolute;left:432px;top:857px;width:1px;height:8px;background:#ffffff;"></div>
<div style="position:absolute;left:433px;top:856px;width:1px;height:8px;background:#6382bf;"></div>
<div style="position:absolute;left:434px;top:857px;width:1px;height:8px;background:#ffffff;"></div>
<div style="position:absolute;left:1028px;top:853px;width:1px;height:14px;background:#7a8a99;"></div>
<div style="position:absolute;left:1029px;top:853px;width:1px;height:14px;background:#ffffff;"></div>
<svg style="position:absolute;left:1034px;top:856px" width="4" height="8" shape-rendering="crispEdges" fill="#333"><rect x="0" y="0" width="1" height="8"/><rect x="1" y="1" width="1" height="6"/><rect x="2" y="2" width="1" height="4"/><rect x="3" y="3" width="1" height="2"/></svg>
<div style="position:absolute;left:1043px;top:852px;width:1px;height:15px;background:#7a8a99;"></div>
<svg style="position:absolute;left:750px;top:266px" width="30" height="32"><path d="M8 7 L19.5 18 L16.4 18.9 L16.4 23.4 L14.2 24.4 L11.4 21 L8 23.6 Z" fill="#000" stroke="#fff" stroke-width="2.4" stroke-linejoin="round" paint-order="stroke"/></svg>
<div class="t" style="left:15.50px;top:1px;letter-spacing:-0.023px;color:#333333;font-size:12.5px;font-weight:bold;">Settings</div>
<div class="t" style="left:87.70px;top:1px;letter-spacing:0.227px;color:#333333;font-size:12.5px;font-weight:bold;">Transformation</div>
<div class="t" style="left:202.30px;top:1px;letter-spacing:-0.055px;color:#333333;font-size:12.5px;font-weight:bold;">Advanced Settings</div>
<div class="t" style="left:336.60px;top:1px;letter-spacing:-0.035px;color:#333333;font-size:12.5px;font-weight:bold;">Limit Rows</div>
<div class="t" style="left:424.60px;top:1px;letter-spacing:-0.101px;color:#333333;font-size:12.5px;font-weight:bold;">Encoding</div>
<div class="t" style="left:501.50px;top:1px;letter-spacing:0.009px;color:#333333;font-size:12.5px;font-weight:bold;">Flow Variables</div>
<div class="t" style="left:610.50px;top:1px;letter-spacing:-0.030px;color:#333333;font-size:12.5px;font-weight:bold;">Job Manager Selection</div>
<div class="t" style="left:767.40px;top:1px;letter-spacing:-0.006px;color:#333333;font-size:12.5px;font-weight:bold;">Memory Policy</div>
<div class="t" style="left:15.20px;top:24px;letter-spacing:0.377px;color:#333333;font-size:12.5px;font-weight:bold;">Input location</div>
<div class="t" style="left:12.80px;top:55px;letter-spacing:-0.025px;color:#333333;font-size:12.5px;font-weight:bold;">Read from</div>
<div class="t" style="left:88.60px;top:55px;letter-spacing:-0.180px;color:#000000;font-size:12.5px;font-weight:bold;">Local File System</div>
<div class="t" style="left:12.80px;top:94px;letter-spacing:0.105px;color:#333333;font-size:12.5px;font-weight:bold;">Mode</div>
<div class="t" style="left:102.00px;top:94px;transform:scaleX(0.9267);transform-origin:0 0;color:#333333;font-size:12.5px;font-weight:bold;">File</div>
<div class="t" style="left:148.60px;top:94px;letter-spacing:0.029px;color:#333333;font-size:12.5px;font-weight:bold;">Files in folder</div>
<div class="t" style="left:12.80px;top:130px;transform:scaleX(0.9128);transform-origin:0 0;color:#333333;font-size:12.5px;font-weight:bold;">File</div>
<div class="t" style="left:88.40px;top:130px;letter-spacing:0.179px;color:#333333;font-size:12.5px;font-weight:bold;">x/data_</div>
<div class="t" style="left:134.00px;top:130px;letter-spacing:0.324px;color:#333333;font-size:12.5px;font-weight:bold;">python/</div>
<div class="t" style="left:182.00px;top:130px;letter-spacing:-0.032px;color:#333333;font-size:12.5px;font-weight:bold;">FAO/</div>
<div class="t" style="left:212.00px;top:130px;transform:scaleX(0.9434);transform-origin:0 0;color:#333333;font-size:12.5px;font-weight:bold;">Comptes_</div>
<div class="t" style="left:270.40px;top:130px;letter-spacing:-0.011px;color:#333333;font-size:12.5px;font-weight:bold;">Disponibilités_</div>
<div class="t" style="left:360.60px;top:130px;letter-spacing:-0.189px;color:#333333;font-size:12.5px;font-weight:bold;">et_Utilisations_</div>
<div class="t" style="left:451.60px;top:130px;letter-spacing:0.142px;color:#333333;font-size:12.5px;font-weight:bold;">Alimentation_</div>
<div class="t" style="left:537.40px;top:130px;transform:scaleX(0.9514);transform-origin:0 0;color:#333333;font-size:12.5px;font-weight:bold;">et_régime_</div>
<div class="t" style="left:601.60px;top:130px;letter-spacing:0.127px;color:#333333;font-size:12.5px;font-weight:bold;">alimentaire_</div>
<div class="t" style="left:677.40px;top:130px;transform:scaleX(0.9196);transform-origin:0 0;color:#333333;font-size:12.5px;font-weight:bold;">F_Toutes_</div>
<div class="t" style="left:735.40px;top:130px;transform:scaleX(0.9352);transform-origin:0 0;color:#333333;font-size:12.5px;font-weight:bold;">les_Données_</div>
<div class="t" style="left:815.40px;top:130px;letter-spacing:-0.139px;color:#333333;font-size:12.5px;font-weight:bold;">(Normalisé).csv</div>
<div class="t" style="left:956.30px;top:130px;transform:scaleX(0.9564);transform-origin:0 0;color:#333333;font-size:12.5px;font-weight:bold;">Browse...</div>
<div class="t" style="left:15.60px;top:188px;letter-spacing:0.028px;color:#333333;font-size:12.5px;font-weight:bold;">Reader options</div>
<div class="t" style="left:21.70px;top:207px;letter-spacing:0.040px;color:#333333;font-size:12.5px;font-weight:bold;">Format</div>
<div class="t" style="left:43.90px;top:236px;letter-spacing:0.233px;color:#333333;font-size:12.5px;font-weight:bold;">Autodetect format</div>
<div class="t" style="left:29.40px;top:275px;letter-spacing:0.000px;color:#333;font-size:12.5px;">,</div>
<div class="t" style="left:70.60px;top:275px;letter-spacing:0.278px;color:#333333;font-size:12.5px;font-weight:bold;">Column delimiter</div>
<div class="t" style="left:237.20px;top:272px;letter-spacing:0.234px;color:#333333;font-size:12.5px;font-weight:bold;">Row delimiter</div>
<div class="t" style="left:346.50px;top:272px;letter-spacing:-0.008px;color:#333333;font-size:12.5px;font-weight:bold;">Line break</div>
<div class="t" style="left:434.60px;top:272px;letter-spacing:-0.143px;color:#333333;font-size:12.5px;font-weight:bold;">Custom</div>
<div class="t" style="left:492.30px;top:270px;letter-spacing:0.531px;color:#b8cfe5;font-size:12.5px;">\r\n</div>
<div class="t" style="left:30.80px;top:316px;letter-spacing:0.000px;color:#333333;font-size:12.5px;">&quot;</div>
<div class="t" style="left:70.60px;top:316px;letter-spacing:-0.080px;color:#333333;font-size:12.5px;font-weight:bold;">Quote char</div>
<div class="t" style="left:244.80px;top:316px;letter-spacing:0.000px;color:#333333;font-size:12.5px;">&quot;</div>
<div class="t" style="left:284.50px;top:316px;letter-spacing:-0.137px;color:#333333;font-size:12.5px;font-weight:bold;">Quote escape char</div>
<div class="t" style="left:30.50px;top:363px;letter-spacing:0.000px;color:#333333;font-size:12.5px;">#</div>
<div class="t" style="left:70.60px;top:363px;letter-spacing:0.068px;color:#333333;font-size:12.5px;font-weight:bold;">Comment char</div>
<div class="t" style="left:45.60px;top:396px;letter-spacing:0.016px;color:#333333;font-size:12.5px;font-weight:bold;">Has column header</div>
<div class="t" style="left:247.50px;top:396px;letter-spacing:-0.158px;color:#333333;font-size:12.5px;font-weight:bold;">Has RowID</div>
<div class="t" style="left:45.30px;top:426px;letter-spacing:0.059px;color:#333333;font-size:12.5px;font-weight:bold;">Support short data rows</div>
<div class="t" style="left:247.50px;top:426px;letter-spacing:0.105px;color:#999999;font-size:12.5px;font-weight:bold;">Prepend file index to RowID</div>
<div class="t" style="left:15.30px;top:458px;letter-spacing:-0.205px;color:#333333;font-size:12.5px;font-weight:bold;">Preview</div>
<div class="t" style="left:37.60px;top:482px;letter-spacing:-0.002px;color:#333333;font-size:12.5px;font-weight:bold;">The suggested column types are based on the first 10000 rows only. See &#x27;Advanced Settings&#x27; tab.</div>
<div class="t" style="left:135.60px;top:530px;transform:scaleX(0.9283);transform-origin:0 0;color:#333333;font-size:12.5px;">Code z...</div>
<div class="t" style="left:210.60px;top:530px;transform:scaleX(0.9324);transform-origin:0 0;color:#333333;font-size:12.5px;">Code z...</div>
<div class="t" style="left:285.60px;top:530px;transform:scaleX(0.9285);transform-origin:0 0;color:#333333;font-size:12.5px;">Zone</div>
<div class="t" style="left:360.60px;top:530px;transform:scaleX(0.9418);transform-origin:0 0;color:#333333;font-size:12.5px;">Code gr...</div>
<div class="t" style="left:435.90px;top:530px;letter-spacing:-0.049px;color:#333333;font-size:12.5px;">Groupe d’aliments</div>
<div class="t" style="left:676.60px;top:530px;transform:scaleX(0.9447);transform-origin:0 0;color:#333333;font-size:12.5px;">Code in...</div>
<div class="t" style="left:750.60px;top:530px;letter-spacing:0.263px;color:#333333;font-size:12.5px;">Indicateur</div>
<div class="t" style="left:882.40px;top:530px;transform:scaleX(0.9299);transform-origin:0 0;color:#333333;font-size:12.5px;">Code Él...</div>
<div class="t" style="left:956.60px;top:530px;letter-spacing:0.003px;color:#333333;font-size:12.5px;">Élément</div>
<div class="t" style="left:1032.40px;top:530px;letter-spacing:0.000px;color:#333333;font-size:12.5px;width:11.6px;overflow:hidden;">Co</div>
<div class="t" style="left:44.86px;top:530px;transform:scaleX(0.9386);transform-origin:0 0;color:#333333;font-size:12.5px;">Row ID</div>
<div class="t" style="left:31.66px;top:550px;transform:scaleX(0.9353);transform-origin:0 0;color:#333333;font-size:12.5px;">Row0</div>
<div class="t" style="left:114.60px;top:550px;letter-spacing:0.000px;color:#333333;font-size:12.5px;">2</div>
<div class="t" style="left:189.50px;top:550px;letter-spacing:-0.063px;color:#333333;font-size:12.5px;">&#x27;004</div>
<div class="t" style="left:264.50px;top:550px;letter-spacing:0.063px;color:#333333;font-size:12.5px;">Afghanistan</div>
<div class="t" style="left:338.92px;top:550px;transform:scaleX(0.8776);transform-origin:0 0;color:#333333;font-size:12.5px;">FG0</div>
<div class="t" style="left:414.70px;top:550px;letter-spacing:-0.113px;color:#333333;font-size:12.5px;">Tous les groupes de</div>
<div class="t" style="left:529.30px;top:550px;letter-spacing:0.111px;color:#333333;font-size:12.5px;">denrées alimentaires</div>
<div class="t" style="left:655.30px;top:550px;transform:scaleX(0.9729);transform-origin:0 0;color:#333333;font-size:12.5px;">4003</div>
<div class="t" style="left:729.80px;top:550px;letter-spacing:0.096px;color:#333333;font-size:12.5px;">Disponibilité</div>
<div class="t" style="left:803.00px;top:550px;letter-spacing:-0.185px;color:#333333;font-size:12.5px;">d’énergie</div>
<div class="t" style="left:861.60px;top:550px;transform:scaleX(0.9621);transform-origin:0 0;color:#333333;font-size:12.5px;">6128</div>
<div class="t" style="left:936.20px;top:550px;letter-spacing:0.092px;color:#333333;font-size:12.5px;">Valeur</div>
<div class="t" style="left:1011.20px;top:550px;transform:scaleX(0.9657);transform-origin:0 0;color:#333333;font-size:12.5px;">2010</div>
<div class="t" style="left:31.66px;top:569px;transform:scaleX(0.9353);transform-origin:0 0;color:#333333;font-size:12.5px;">Row1</div>
<div class="t" style="left:114.60px;top:569px;letter-spacing:0.000px;color:#333333;font-size:12.5px;">2</div>
<div class="t" style="left:189.50px;top:569px;letter-spacing:-0.063px;color:#333333;font-size:12.5px;">&#x27;004</div>
<div class="t" style="left:264.50px;top:569px;letter-spacing:0.063px;color:#333333;font-size:12.5px;">Afghanistan</div>
<div class="t" style="left:338.92px;top:569px;transform:scaleX(0.8776);transform-origin:0 0;color:#333333;font-size:12.5px;">FG0</div>
<div class="t" style="left:414.70px;top:569px;letter-spacing:-0.113px;color:#333333;font-size:12.5px;">Tous les groupes de</div>
<div class="t" style="left:529.30px;top:569px;letter-spacing:0.111px;color:#333333;font-size:12.5px;">denrées alimentaires</div>
<div class="t" style="left:655.30px;top:569px;transform:scaleX(0.9729);transform-origin:0 0;color:#333333;font-size:12.5px;">4003</div>
<div class="t" style="left:729.80px;top:569px;letter-spacing:0.096px;color:#333333;font-size:12.5px;">Disponibilité</div>
<div class="t" style="left:803.00px;top:569px;letter-spacing:-0.185px;color:#333333;font-size:12.5px;">d’énergie</div>
<div class="t" style="left:861.60px;top:569px;transform:scaleX(0.9621);transform-origin:0 0;color:#333333;font-size:12.5px;">6128</div>
<div class="t" style="left:936.20px;top:569px;letter-spacing:0.092px;color:#333333;font-size:12.5px;">Valeur</div>
<div class="t" style="left:1011.20px;top:569px;letter-spacing:-0.009px;color:#333333;font-size:12.5px;">2011</div>
<div class="t" style="left:31.66px;top:588px;transform:scaleX(0.9353);transform-origin:0 0;color:#333333;font-size:12.5px;">Row2</div>
<div class="t" style="left:114.60px;top:588px;letter-spacing:0.000px;color:#333333;font-size:12.5px;">2</div>
<div class="t" style="left:189.50px;top:588px;letter-spacing:-0.063px;color:#333333;font-size:12.5px;">&#x27;004</div>
<div class="t" style="left:264.50px;top:588px;letter-spacing:0.063px;color:#333333;font-size:12.5px;">Afghanistan</div>
<div class="t" style="left:338.92px;top:588px;transform:scaleX(0.8776);transform-origin:0 0;color:#333333;font-size:12.5px;">FG0</div>
<div class="t" style="left:414.70px;top:588px;letter-spacing:-0.113px;color:#333333;font-size:12.5px;">Tous les groupes de</div>
<div class="t" style="left:529.30px;top:588px;letter-spacing:0.111px;color:#333333;font-size:12.5px;">denrées alimentaires</div>
<div class="t" style="left:655.30px;top:588px;transform:scaleX(0.9729);transform-origin:0 0;color:#333333;font-size:12.5px;">4003</div>
<div class="t" style="left:729.80px;top:588px;letter-spacing:0.096px;color:#333333;font-size:12.5px;">Disponibilité</div>
<div class="t" style="left:803.00px;top:588px;letter-spacing:-0.185px;color:#333333;font-size:12.5px;">d’énergie</div>
<div class="t" style="left:861.60px;top:588px;transform:scaleX(0.9621);transform-origin:0 0;color:#333333;font-size:12.5px;">6128</div>
<div class="t" style="left:936.20px;top:588px;letter-spacing:0.092px;color:#333333;font-size:12.5px;">Valeur</div>
<div class="t" style="left:1011.20px;top:588px;transform:scaleX(0.9657);transform-origin:0 0;color:#333333;font-size:12.5px;">2012</div>
<div class="t" style="left:31.66px;top:607px;transform:scaleX(0.9353);transform-origin:0 0;color:#333333;font-size:12.5px;">Row3</div>
<div class="t" style="left:114.60px;top:607px;letter-spacing:0.000px;color:#333333;font-size:12.5px;">2</div>
<div class="t" style="left:189.50px;top:607px;letter-spacing:-0.063px;color:#333333;font-size:12.5px;">&#x27;004</div>
<div class="t" style="left:264.50px;top:607px;letter-spacing:0.063px;color:#333333;font-size:12.5px;">Afghanistan</div>
<div class="t" style="left:338.92px;top:607px;transform:scaleX(0.8776);transform-origin:0 0;color:#333333;font-size:12.5px;">FG0</div>
<div class="t" style="left:414.70px;top:607px;letter-spacing:-0.113px;color:#333333;font-size:12.5px;">Tous les groupes de</div>
<div class="t" style="left:529.30px;top:607px;letter-spacing:0.111px;color:#333333;font-size:12.5px;">denrées alimentaires</div>
<div class="t" style="left:655.30px;top:607px;transform:scaleX(0.9729);transform-origin:0 0;color:#333333;font-size:12.5px;">4003</div>
<div class="t" style="left:729.80px;top:607px;letter-spacing:0.096px;color:#333333;font-size:12.5px;">Disponibilité</div>
<div class="t" style="left:803.00px;top:607px;letter-spacing:-0.185px;color:#333333;font-size:12.5px;">d’énergie</div>
<div class="t" style="left:861.60px;top:607px;transform:scaleX(0.9621);transform-origin:0 0;color:#333333;font-size:12.5px;">6128</div>
<div class="t" style="left:936.20px;top:607px;letter-spacing:0.092px;color:#333333;font-size:12.5px;">Valeur</div>
<div class="t" style="left:1011.20px;top:607px;transform:scaleX(0.9657);transform-origin:0 0;color:#333333;font-size:12.5px;">2013</div>
<div class="t" style="left:31.66px;top:626px;transform:scaleX(0.9353);transform-origin:0 0;color:#333333;font-size:12.5px;">Row4</div>
<div class="t" style="left:114.60px;top:626px;letter-spacing:0.000px;color:#333333;font-size:12.5px;">2</div>
<div class="t" style="left:189.50px;top:626px;letter-spacing:-0.063px;color:#333333;font-size:12.5px;">&#x27;004</div>
<div class="t" style="left:264.50px;top:626px;letter-spacing:0.063px;color:#333333;font-size:12.5px;">Afghanistan</div>
<div class="t" style="left:338.92px;top:626px;transform:scaleX(0.8776);transform-origin:0 0;color:#333333;font-size:12.5px;">FG0</div>
<div class="t" style="left:414.70px;top:626px;letter-spacing:-0.113px;color:#333333;font-size:12.5px;">Tous les groupes de</div>
<div class="t" style="left:529.30px;top:626px;letter-spacing:0.111px;color:#333333;font-size:12.5px;">denrées alimentaires</div>
<div class="t" style="left:655.30px;top:626px;transform:scaleX(0.9729);transform-origin:0 0;color:#333333;font-size:12.5px;">4003</div>
<div class="t" style="left:729.80px;top:626px;letter-spacing:0.096px;color:#333333;font-size:12.5px;">Disponibilité</div>
<div class="t" style="left:803.00px;top:626px;letter-spacing:-0.185px;color:#333333;font-size:12.5px;">d’énergie</div>
<div class="t" style="left:861.60px;top:626px;transform:scaleX(0.9621);transform-origin:0 0;color:#333333;font-size:12.5px;">6128</div>
<div class="t" style="left:936.20px;top:626px;letter-spacing:0.092px;color:#333333;font-size:12.5px;">Valeur</div>
<div class="t" style="left:1011.20px;top:626px;transform:scaleX(0.9657);transform-origin:0 0;color:#333333;font-size:12.5px;">2014</div>
<div class="t" style="left:31.66px;top:645px;transform:scaleX(0.9353);transform-origin:0 0;color:#333333;font-size:12.5px;">Row5</div>
<div class="t" style="left:114.60px;top:645px;letter-spacing:0.000px;color:#333333;font-size:12.5px;">2</div>
<div class="t" style="left:189.50px;top:645px;letter-spacing:-0.063px;color:#333333;font-size:12.5px;">&#x27;004</div>
<div class="t" style="left:264.50px;top:645px;letter-spacing:0.063px;color:#333333;font-size:12.5px;">Afghanistan</div>
<div class="t" style="left:338.92px;top:645px;transform:scaleX(0.8776);transform-origin:0 0;color:#333333;font-size:12.5px;">FG0</div>
<div class="t" style="left:414.70px;top:645px;letter-spacing:-0.113px;color:#333333;font-size:12.5px;">Tous les groupes de</div>
<div class="t" style="left:529.30px;top:645px;letter-spacing:0.111px;color:#333333;font-size:12.5px;">denrées alimentaires</div>
<div class="t" style="left:655.30px;top:645px;transform:scaleX(0.9729);transform-origin:0 0;color:#333333;font-size:12.5px;">4003</div>
<div class="t" style="left:729.80px;top:645px;letter-spacing:0.096px;color:#333333;font-size:12.5px;">Disponibilité</div>
<div class="t" style="left:803.00px;top:645px;letter-spacing:-0.185px;color:#333333;font-size:12.5px;">d’énergie</div>
<div class="t" style="left:861.60px;top:645px;transform:scaleX(0.9621);transform-origin:0 0;color:#333333;font-size:12.5px;">6128</div>
<div class="t" style="left:936.20px;top:645px;letter-spacing:0.092px;color:#333333;font-size:12.5px;">Valeur</div>
<div class="t" style="left:1011.20px;top:645px;transform:scaleX(0.9657);transform-origin:0 0;color:#333333;font-size:12.5px;">2015</div>
<div class="t" style="left:31.66px;top:664px;transform:scaleX(0.9353);transform-origin:0 0;color:#333333;font-size:12.5px;">Row6</div>
<div class="t" style="left:114.60px;top:664px;letter-spacing:0.000px;color:#333333;font-size:12.5px;">2</div>
<div class="t" style="left:189.50px;top:664px;letter-spacing:-0.063px;color:#333333;font-size:12.5px;">&#x27;004</div>
<div class="t" style="left:264.50px;top:664px;letter-spacing:0.063px;color:#333333;font-size:12.5px;">Afghanistan</div>
<div class="t" style="left:338.92px;top:664px;transform:scaleX(0.8776);transform-origin:0 0;color:#333333;font-size:12.5px;">FG0</div>
<div class="t" style="left:414.70px;top:664px;letter-spacing:-0.113px;color:#333333;font-size:12.5px;">Tous les groupes de</div>
<div class="t" style="left:529.30px;top:664px;letter-spacing:0.111px;color:#333333;font-size:12.5px;">denrées alimentaires</div>
<div class="t" style="left:655.30px;top:664px;transform:scaleX(0.9729);transform-origin:0 0;color:#333333;font-size:12.5px;">4003</div>
<div class="t" style="left:729.80px;top:664px;letter-spacing:0.096px;color:#333333;font-size:12.5px;">Disponibilité</div>
<div class="t" style="left:803.00px;top:664px;letter-spacing:-0.185px;color:#333333;font-size:12.5px;">d’énergie</div>
<div class="t" style="left:861.60px;top:664px;transform:scaleX(0.9621);transform-origin:0 0;color:#333333;font-size:12.5px;">6128</div>
<div class="t" style="left:936.20px;top:664px;letter-spacing:0.092px;color:#333333;font-size:12.5px;">Valeur</div>
<div class="t" style="left:1011.20px;top:664px;transform:scaleX(0.9657);transform-origin:0 0;color:#333333;font-size:12.5px;">2016</div>
<div class="t" style="left:31.66px;top:683px;transform:scaleX(0.9353);transform-origin:0 0;color:#333333;font-size:12.5px;">Row7</div>
<div class="t" style="left:114.60px;top:683px;letter-spacing:0.000px;color:#333333;font-size:12.5px;">2</div>
<div class="t" style="left:189.50px;top:683px;letter-spacing:-0.063px;color:#333333;font-size:12.5px;">&#x27;004</div>
<div class="t" style="left:264.50px;top:683px;letter-spacing:0.063px;color:#333333;font-size:12.5px;">Afghanistan</div>
<div class="t" style="left:338.92px;top:683px;transform:scaleX(0.8776);transform-origin:0 0;color:#333333;font-size:12.5px;">FG0</div>
<div class="t" style="left:414.70px;top:683px;letter-spacing:-0.113px;color:#333333;font-size:12.5px;">Tous les groupes de</div>
<div class="t" style="left:529.30px;top:683px;letter-spacing:0.111px;color:#333333;font-size:12.5px;">denrées alimentaires</div>
<div class="t" style="left:655.30px;top:683px;transform:scaleX(0.9729);transform-origin:0 0;color:#333333;font-size:12.5px;">4003</div>
<div class="t" style="left:729.80px;top:683px;letter-spacing:0.096px;color:#333333;font-size:12.5px;">Disponibilité</div>
<div class="t" style="left:803.00px;top:683px;letter-spacing:-0.185px;color:#333333;font-size:12.5px;">d’énergie</div>
<div class="t" style="left:861.60px;top:683px;transform:scaleX(0.9621);transform-origin:0 0;color:#333333;font-size:12.5px;">6128</div>
<div class="t" style="left:936.20px;top:683px;letter-spacing:0.092px;color:#333333;font-size:12.5px;">Valeur</div>
<div class="t" style="left:1011.20px;top:683px;transform:scaleX(0.9657);transform-origin:0 0;color:#333333;font-size:12.5px;">2017</div>
<div class="t" style="left:31.66px;top:702px;transform:scaleX(0.9353);transform-origin:0 0;color:#333333;font-size:12.5px;">Row8</div>
<div class="t" style="left:114.60px;top:702px;letter-spacing:0.000px;color:#333333;font-size:12.5px;">2</div>
<div class="t" style="left:189.50px;top:702px;letter-spacing:-0.063px;color:#333333;font-size:12.5px;">&#x27;004</div>
<div class="t" style="left:264.50px;top:702px;letter-spacing:0.063px;color:#333333;font-size:12.5px;">Afghanistan</div>
<div class="t" style="left:338.92px;top:702px;transform:scaleX(0.8776);transform-origin:0 0;color:#333333;font-size:12.5px;">FG0</div>
<div class="t" style="left:414.70px;top:702px;letter-spacing:-0.113px;color:#333333;font-size:12.5px;">Tous les groupes de</div>
<div class="t" style="left:529.30px;top:702px;letter-spacing:0.111px;color:#333333;font-size:12.5px;">denrées alimentaires</div>
<div class="t" style="left:655.30px;top:702px;transform:scaleX(0.9729);transform-origin:0 0;color:#333333;font-size:12.5px;">4003</div>
<div class="t" style="left:729.80px;top:702px;letter-spacing:0.096px;color:#333333;font-size:12.5px;">Disponibilité</div>
<div class="t" style="left:803.00px;top:702px;letter-spacing:-0.185px;color:#333333;font-size:12.5px;">d’énergie</div>
<div class="t" style="left:861.60px;top:702px;transform:scaleX(0.9621);transform-origin:0 0;color:#333333;font-size:12.5px;">6128</div>
<div class="t" style="left:936.20px;top:702px;letter-spacing:0.092px;color:#333333;font-size:12.5px;">Valeur</div>
<div class="t" style="left:1011.20px;top:702px;transform:scaleX(0.9657);transform-origin:0 0;color:#333333;font-size:12.5px;">2018</div>
<div class="t" style="left:31.66px;top:721px;transform:scaleX(0.9353);transform-origin:0 0;color:#333333;font-size:12.5px;">Row9</div>
<div class="t" style="left:114.60px;top:721px;letter-spacing:0.000px;color:#333333;font-size:12.5px;">2</div>
<div class="t" style="left:189.50px;top:721px;letter-spacing:-0.063px;color:#333333;font-size:12.5px;">&#x27;004</div>
<div class="t" style="left:264.50px;top:721px;letter-spacing:0.063px;color:#333333;font-size:12.5px;">Afghanistan</div>
<div class="t" style="left:338.92px;top:721px;transform:scaleX(0.8776);transform-origin:0 0;color:#333333;font-size:12.5px;">FG0</div>
<div class="t" style="left:414.70px;top:721px;letter-spacing:-0.113px;color:#333333;font-size:12.5px;">Tous les groupes de</div>
<div class="t" style="left:529.30px;top:721px;letter-spacing:0.111px;color:#333333;font-size:12.5px;">denrées alimentaires</div>
<div class="t" style="left:655.30px;top:721px;transform:scaleX(0.9729);transform-origin:0 0;color:#333333;font-size:12.5px;">4003</div>
<div class="t" style="left:729.80px;top:721px;letter-spacing:0.096px;color:#333333;font-size:12.5px;">Disponibilité</div>
<div class="t" style="left:803.00px;top:721px;letter-spacing:-0.185px;color:#333333;font-size:12.5px;">d’énergie</div>
<div class="t" style="left:861.60px;top:721px;transform:scaleX(0.9621);transform-origin:0 0;color:#333333;font-size:12.5px;">6128</div>
<div class="t" style="left:936.20px;top:721px;letter-spacing:0.092px;color:#333333;font-size:12.5px;">Valeur</div>
<div class="t" style="left:1011.20px;top:721px;transform:scaleX(0.9657);transform-origin:0 0;color:#333333;font-size:12.5px;">2019</div>
<div class="t" style="left:31.66px;top:740px;transform:scaleX(0.9431);transform-origin:0 0;color:#333333;font-size:12.5px;">Row10</div>
<div class="t" style="left:114.60px;top:740px;letter-spacing:0.000px;color:#333333;font-size:12.5px;">2</div>
<div class="t" style="left:189.50px;top:740px;letter-spacing:-0.063px;color:#333333;font-size:12.5px;">&#x27;004</div>
<div class="t" style="left:264.50px;top:740px;letter-spacing:0.063px;color:#333333;font-size:12.5px;">Afghanistan</div>
<div class="t" style="left:338.92px;top:740px;transform:scaleX(0.8776);transform-origin:0 0;color:#333333;font-size:12.5px;">FG0</div>
<div class="t" style="left:414.70px;top:740px;letter-spacing:-0.113px;color:#333333;font-size:12.5px;">Tous les groupes de</div>
<div class="t" style="left:529.30px;top:740px;letter-spacing:0.111px;color:#333333;font-size:12.5px;">denrées alimentaires</div>
<div class="t" style="left:655.30px;top:740px;transform:scaleX(0.9729);transform-origin:0 0;color:#333333;font-size:12.5px;">4003</div>
<div class="t" style="left:729.80px;top:740px;letter-spacing:0.096px;color:#333333;font-size:12.5px;">Disponibilité</div>
<div class="t" style="left:803.00px;top:740px;letter-spacing:-0.185px;color:#333333;font-size:12.5px;">d’énergie</div>
<div class="t" style="left:861.60px;top:740px;transform:scaleX(0.9621);transform-origin:0 0;color:#333333;font-size:12.5px;">6128</div>
<div class="t" style="left:936.20px;top:740px;letter-spacing:0.092px;color:#333333;font-size:12.5px;">Valeur</div>
<div class="t" style="left:1011.20px;top:740px;transform:scaleX(0.9657);transform-origin:0 0;color:#333333;font-size:12.5px;">2020</div>
<div class="t" style="left:31.63px;top:759px;transform:scaleX(0.9668);transform-origin:0 0;color:#333333;font-size:12.5px;">Row11</div>
<div class="t" style="left:114.60px;top:759px;letter-spacing:0.000px;color:#333333;font-size:12.5px;">2</div>
<div class="t" style="left:189.50px;top:759px;letter-spacing:-0.063px;color:#333333;font-size:12.5px;">&#x27;004</div>
<div class="t" style="left:264.50px;top:759px;letter-spacing:0.063px;color:#333333;font-size:12.5px;">Afghanistan</div>
<div class="t" style="left:338.92px;top:759px;transform:scaleX(0.8776);transform-origin:0 0;color:#333333;font-size:12.5px;">FG0</div>
<div class="t" style="left:414.70px;top:759px;letter-spacing:-0.113px;color:#333333;font-size:12.5px;">Tous les groupes de</div>
<div class="t" style="left:529.30px;top:759px;letter-spacing:0.111px;color:#333333;font-size:12.5px;">denrées alimentaires</div>
<div class="t" style="left:655.30px;top:759px;transform:scaleX(0.9729);transform-origin:0 0;color:#333333;font-size:12.5px;">4003</div>
<div class="t" style="left:729.80px;top:759px;letter-spacing:0.096px;color:#333333;font-size:12.5px;">Disponibilité</div>
<div class="t" style="left:803.00px;top:759px;letter-spacing:-0.185px;color:#333333;font-size:12.5px;">d’énergie</div>
<div class="t" style="left:861.60px;top:759px;transform:scaleX(0.9621);transform-origin:0 0;color:#333333;font-size:12.5px;">6128</div>
<div class="t" style="left:936.20px;top:759px;letter-spacing:0.092px;color:#333333;font-size:12.5px;">Valeur</div>
<div class="t" style="left:1011.20px;top:759px;transform:scaleX(0.9657);transform-origin:0 0;color:#333333;font-size:12.5px;">2021</div>
<div class="t" style="left:31.66px;top:778px;transform:scaleX(0.9431);transform-origin:0 0;color:#333333;font-size:12.5px;">Row12</div>
<div class="t" style="left:114.60px;top:778px;letter-spacing:0.000px;color:#333333;font-size:12.5px;">2</div>
<div class="t" style="left:189.50px;top:778px;letter-spacing:-0.063px;color:#333333;font-size:12.5px;">&#x27;004</div>
<div class="t" style="left:264.50px;top:778px;letter-spacing:0.063px;color:#333333;font-size:12.5px;">Afghanistan</div>
<div class="t" style="left:338.92px;top:778px;transform:scaleX(0.8776);transform-origin:0 0;color:#333333;font-size:12.5px;">FG0</div>
<div class="t" style="left:414.70px;top:778px;letter-spacing:-0.113px;color:#333333;font-size:12.5px;">Tous les groupes de</div>
<div class="t" style="left:529.30px;top:778px;letter-spacing:0.111px;color:#333333;font-size:12.5px;">denrées alimentaires</div>
<div class="t" style="left:655.30px;top:778px;transform:scaleX(0.9729);transform-origin:0 0;color:#333333;font-size:12.5px;">4003</div>
<div class="t" style="left:729.80px;top:778px;letter-spacing:0.096px;color:#333333;font-size:12.5px;">Disponibilité</div>
<div class="t" style="left:803.00px;top:778px;letter-spacing:-0.185px;color:#333333;font-size:12.5px;">d’énergie</div>
<div class="t" style="left:861.60px;top:778px;transform:scaleX(0.9621);transform-origin:0 0;color:#333333;font-size:12.5px;">6128</div>
<div class="t" style="left:936.20px;top:778px;letter-spacing:0.092px;color:#333333;font-size:12.5px;">Valeur</div>
<div class="t" style="left:1011.20px;top:778px;transform:scaleX(0.9657);transform-origin:0 0;color:#333333;font-size:12.5px;">2022</div>
<div class="t" style="left:31.66px;top:797px;transform:scaleX(0.9431);transform-origin:0 0;color:#333333;font-size:12.5px;">Row13</div>
<div class="t" style="left:114.60px;top:797px;letter-spacing:0.000px;color:#333333;font-size:12.5px;">2</div>
<div class="t" style="left:189.50px;top:797px;letter-spacing:-0.063px;color:#333333;font-size:12.5px;">&#x27;004</div>
<div class="t" style="left:264.50px;top:797px;letter-spacing:0.063px;color:#333333;font-size:12.5px;">Afghanistan</div>
<div class="t" style="left:338.92px;top:797px;transform:scaleX(0.8776);transform-origin:0 0;color:#333333;font-size:12.5px;">FG0</div>
<div class="t" style="left:414.70px;top:797px;letter-spacing:-0.113px;color:#333333;font-size:12.5px;">Tous les groupes de</div>
<div class="t" style="left:529.30px;top:797px;letter-spacing:0.111px;color:#333333;font-size:12.5px;">denrées alimentaires</div>
<div class="t" style="left:655.30px;top:797px;transform:scaleX(0.9729);transform-origin:0 0;color:#333333;font-size:12.5px;">4004</div>
<div class="t" style="left:729.80px;top:797px;letter-spacing:0.096px;color:#333333;font-size:12.5px;">Disponibilité</div>
<div class="t" style="left:803.00px;top:797px;letter-spacing:-0.101px;color:#333333;font-size:12.5px;">de proté...</div>
<div class="t" style="left:861.60px;top:797px;transform:scaleX(0.9621);transform-origin:0 0;color:#333333;font-size:12.5px;">6123</div>
<div class="t" style="left:936.20px;top:797px;letter-spacing:0.092px;color:#333333;font-size:12.5px;">Valeur</div>
<div class="t" style="left:1011.20px;top:797px;transform:scaleX(0.9657);transform-origin:0 0;color:#333333;font-size:12.5px;">2010</div>
<div class="t" style="left:31.66px;top:816px;transform:scaleX(0.9431);transform-origin:0 0;color:#333333;font-size:12.5px;">Row14</div>
<div class="t" style="left:114.60px;top:816px;letter-spacing:0.000px;color:#333333;font-size:12.5px;">2</div>
<div class="t" style="left:189.50px;top:816px;letter-spacing:-0.063px;color:#333333;font-size:12.5px;">&#x27;004</div>
<div class="t" style="left:264.50px;top:816px;letter-spacing:0.063px;color:#333333;font-size:12.5px;">Afghanistan</div>
<div class="t" style="left:338.92px;top:816px;transform:scaleX(0.8776);transform-origin:0 0;color:#333333;font-size:12.5px;">FG0</div>
<div class="t" style="left:414.70px;top:816px;letter-spacing:-0.113px;color:#333333;font-size:12.5px;">Tous les groupes de</div>
<div class="t" style="left:529.30px;top:816px;letter-spacing:0.111px;color:#333333;font-size:12.5px;">denrées alimentaires</div>
<div class="t" style="left:655.30px;top:816px;transform:scaleX(0.9729);transform-origin:0 0;color:#333333;font-size:12.5px;">4004</div>
<div class="t" style="left:729.80px;top:816px;letter-spacing:0.096px;color:#333333;font-size:12.5px;">Disponibilité</div>
<div class="t" style="left:803.00px;top:816px;letter-spacing:-0.101px;color:#333333;font-size:12.5px;">de proté...</div>
<div class="t" style="left:861.60px;top:816px;transform:scaleX(0.9621);transform-origin:0 0;color:#333333;font-size:12.5px;">6123</div>
<div class="t" style="left:936.20px;top:816px;letter-spacing:0.092px;color:#333333;font-size:12.5px;">Valeur</div>
<div class="t" style="left:1011.20px;top:816px;letter-spacing:-0.009px;color:#333333;font-size:12.5px;">2011</div>
<div class="t" style="left:31.66px;top:835px;transform:scaleX(0.9431);transform-origin:0 0;color:#333333;font-size:12.5px;">Row15</div>
<div class="t" style="left:114.60px;top:835px;letter-spacing:0.000px;color:#333333;font-size:12.5px;">2</div>
<div class="t" style="left:189.50px;top:835px;letter-spacing:-0.063px;color:#333333;font-size:12.5px;">&#x27;004</div>
<div class="t" style="left:264.50px;top:835px;letter-spacing:0.063px;color:#333333;font-size:12.5px;">Afghanistan</div>
<div class="t" style="left:338.92px;top:835px;transform:scaleX(0.8776);transform-origin:0 0;color:#333333;font-size:12.5px;">FG0</div>
<div class="t" style="left:414.70px;top:835px;letter-spacing:-0.113px;color:#333333;font-size:12.5px;">Tous les groupes de</div>
<div class="t" style="left:529.30px;top:835px;letter-spacing:0.111px;color:#333333;font-size:12.5px;">denrées alimentaires</div>
<div class="t" style="left:655.30px;top:835px;transform:scaleX(0.9729);transform-origin:0 0;color:#333333;font-size:12.5px;">4004</div>
<div class="t" style="left:729.80px;top:835px;letter-spacing:0.096px;color:#333333;font-size:12.5px;">Disponibilité</div>
<div class="t" style="left:803.00px;top:835px;letter-spacing:-0.101px;color:#333333;font-size:12.5px;">de proté...</div>
<div class="t" style="left:861.60px;top:835px;transform:scaleX(0.9621);transform-origin:0 0;color:#333333;font-size:12.5px;">6123</div>
<div class="t" style="left:936.20px;top:835px;letter-spacing:0.092px;color:#333333;font-size:12.5px;">Valeur</div>
<div class="t" style="left:1011.20px;top:835px;transform:scaleX(0.9657);transform-origin:0 0;color:#333333;font-size:12.5px;">2012</div>
</body></html>
